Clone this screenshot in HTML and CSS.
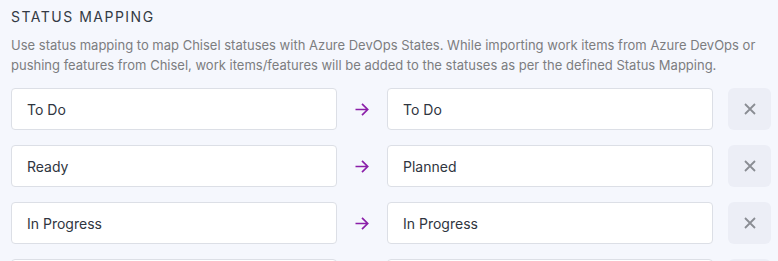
FILE: index.html
```html
<!DOCTYPE html>
<html lang="en">
<head>
<meta charset="utf-8">
<title>Status Mapping</title>
<link rel="stylesheet" href="styles.css">
</head>
<body>
<section class="mapping">
  <h2 class="title">STATUS MAPPING</h2>
  <p class="desc">Use status mapping to map Chisel statuses with Azure DevOps States. While importing work items from Azure DevOps or pushing features from Chisel, work items/features will be added to the statuses as per the defined Status Mapping.</p>
  <div class="rows">
    <div class="row">
      <div class="field">To Do</div>
      <div class="arrow"><svg width="14" height="13" viewBox="0 0 14 13"><path d="M0.5 6.5H13M7 0.8L12.7 6.5L7 12.2" fill="none" stroke="#8b1fa9" stroke-width="1.7"/></svg></div>
      <div class="field">To Do</div>
      <button class="remove"><svg width="12" height="12" viewBox="0 0 12 12"><path d="M1 1L11 11M11 1L1 11" stroke="#8a8d93" stroke-width="1.8"/></svg></button>
    </div>
    <div class="row">
      <div class="field">Ready</div>
      <div class="arrow"><svg width="14" height="13" viewBox="0 0 14 13"><path d="M0.5 6.5H13M7 0.8L12.7 6.5L7 12.2" fill="none" stroke="#8b1fa9" stroke-width="1.7"/></svg></div>
      <div class="field">Planned</div>
      <button class="remove"><svg width="12" height="12" viewBox="0 0 12 12"><path d="M1 1L11 11M11 1L1 11" stroke="#8a8d93" stroke-width="1.8"/></svg></button>
    </div>
    <div class="row">
      <div class="field">In Progress</div>
      <div class="arrow"><svg width="14" height="13" viewBox="0 0 14 13"><path d="M0.5 6.5H13M7 0.8L12.7 6.5L7 12.2" fill="none" stroke="#8b1fa9" stroke-width="1.7"/></svg></div>
      <div class="field">In Progress</div>
      <button class="remove"><svg width="12" height="12" viewBox="0 0 12 12"><path d="M1 1L11 11M11 1L1 11" stroke="#8a8d93" stroke-width="1.8"/></svg></button>
    </div>
    <div class="row">
      <div class="field"></div>
      <div class="arrow"></div>
      <div class="field"></div>
      <button class="remove"></button>
    </div>
  </div>
</section>
</body>
</html>
```
FILE: styles.css
```css
html, body {
  margin: 0;
  padding: 0;
  background: #f5f7fd;
  font-family: Inter, "Noto Sans", sans-serif;
  overflow: hidden;
}
.mapping {
  padding: 7px 7px 0 11px;
}
.title {
  margin: 0;
  font-size: 14px;
  font-weight: 400;
  letter-spacing: 1.5px;
  color: #333a44;
  line-height: 20px;
}
.desc {
  margin: 8px 0 0;
  font-size: 13px;
  line-height: 20px;
  color: #7c7d80;
}
.rows {
  margin-top: 13px;
  display: flex;
  flex-direction: column;
  gap: 15px;
}
.row {
  display: flex;
  align-items: center;
  height: 42px;
}
.field {
  flex: 1;
  height: 42px;
  box-sizing: border-box;
  border: 1px solid #dcdfe6;
  border-radius: 4px;
  background: #fff;
  padding: 0 15px;
  display: flex;
  align-items: center;
  font-size: 14px;
  color: #2f3540;
}
.arrow {
  width: 50px;
  display: flex;
  justify-content: center;
  align-items: center;
}
.remove {
  margin-left: 15px;
  width: 43px;
  height: 42px;
  border: none;
  border-radius: 6px;
  background: #eceef6;
  display: flex;
  align-items: center;
  justify-content: center;
  padding: 0;
}
```
